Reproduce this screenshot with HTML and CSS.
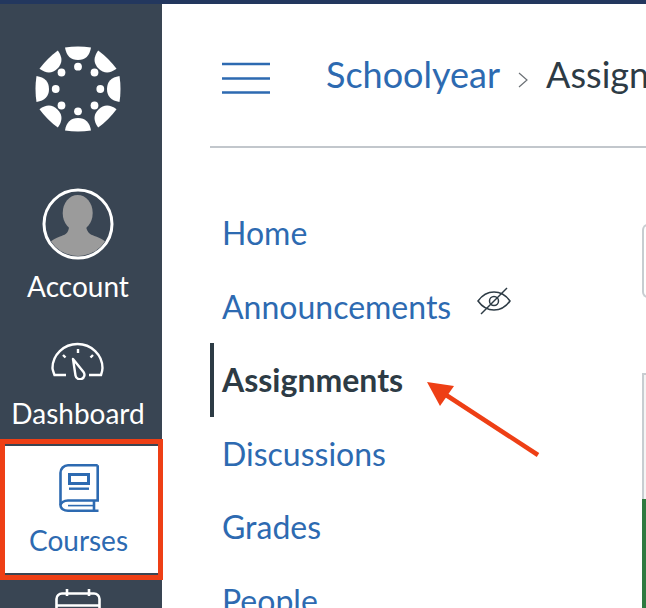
FILE: index.html
```html
<!DOCTYPE html>
<html lang="en">
<head>
<meta charset="utf-8">
<title>Schoolyear Assignments</title>
<link rel="stylesheet" href="styles.css">
</head>
<body>
<div class="topline"></div>
<div class="app">
  <nav class="rail">
    <svg class="logo" viewBox="0 0 86 86" aria-hidden="true">
      <g fill="#fff">
        <path d="M30 1.500 Q43 -0.500 56 1.500 Q54 14 43 14 Q32 14 30 1.500Z"/>
        <path d="M30 1.500 Q43 -0.500 56 1.500 Q54 14 43 14 Q32 14 30 1.500Z" transform="rotate(45 43 43)"/>
        <path d="M30 1.500 Q43 -0.500 56 1.500 Q54 14 43 14 Q32 14 30 1.500Z" transform="rotate(90 43 43)"/>
        <path d="M30 1.500 Q43 -0.500 56 1.500 Q54 14 43 14 Q32 14 30 1.500Z" transform="rotate(135 43 43)"/>
        <path d="M30 1.500 Q43 -0.500 56 1.500 Q54 14 43 14 Q32 14 30 1.500Z" transform="rotate(180 43 43)"/>
        <path d="M30 1.500 Q43 -0.500 56 1.500 Q54 14 43 14 Q32 14 30 1.500Z" transform="rotate(225 43 43)"/>
        <path d="M30 1.500 Q43 -0.500 56 1.500 Q54 14 43 14 Q32 14 30 1.500Z" transform="rotate(270 43 43)"/>
        <path d="M30 1.500 Q43 -0.500 56 1.500 Q54 14 43 14 Q32 14 30 1.500Z" transform="rotate(315 43 43)"/>
        <circle cx="43" cy="20.700" r="3.900"/><circle cx="43" cy="65.300" r="3.900"/>
        <circle cx="20.700" cy="43" r="3.900"/><circle cx="65.300" cy="43" r="3.900"/>
        <circle cx="26.500" cy="26.500" r="3.900"/><circle cx="59.500" cy="26.500" r="3.900"/>
        <circle cx="26.500" cy="59.500" r="3.900"/><circle cx="59.500" cy="59.500" r="3.900"/>
      </g>
    </svg>
    <a class="rail-item account">
      <svg class="avatar" viewBox="0 0 72 72" aria-hidden="true">
        <defs><clipPath id="c"><circle cx="36" cy="36" r="32"/></clipPath></defs>
        <circle cx="36" cy="36" r="34" fill="#394553"/>
        <g clip-path="url(#c)" fill="#9b9b9b">
          <ellipse cx="35.700" cy="25" rx="15" ry="18"/>
          <path d="M27 38C27 46 22 47 18 48.500C14 50 10 52 6 56V72H66V56C62 52 58 50 54 48.500C50 47 45 46 44 38z"/>
        </g>
        <circle cx="36" cy="36" r="34" fill="none" stroke="#fff" stroke-width="3"/>
      </svg>
      <span>Account</span>
    </a>
    <a class="rail-item dashboard">
      <svg class="dash-icon" viewBox="0 0 54 38" fill="none" stroke="#fff" stroke-width="2.400" aria-hidden="true">
        <path d="M15 33H3.500C2 29 1.500 27 1.500 26A25 24 0 0 1 51.500 26C51.500 28 51 30 50 33H38"/>
        <path d="M27 7v4M12 13l2.500 2.500M42 13l-2.500 2.500"/>
        <path d="M22 17l10.500 13a4.500 4.500 0 1 1-8 3.500z" stroke-linejoin="round"/>
      </svg>
      <span>Dashboard</span>
    </a>
    <a class="rail-item courses">
      <svg class="book-icon" viewBox="0 0 40 48" fill="none" stroke="#2d6ab1" stroke-width="2.600" aria-hidden="true">
        <path d="M38.700 1.300V36.500H9A7.500 5.100 0 0 0 9 46.700H39.500"/>
        <path d="M38.700 1.300H9A7.500 7.500 0 0 0 1.500 8.800V41"/>
        <path d="M35 36.500V46.700"/>
        <path d="M9 41.600H35" stroke-width="1.600"/>
        <rect x="10.500" y="10.500" width="19" height="9" stroke-width="3"/>
        <path d="M10 24.700H30" stroke-width="2.400"/>
      </svg>
      <span>Courses</span>
    </a>
    <svg class="cal-icon" viewBox="0 0 46 24" fill="none" stroke="#fff" stroke-width="2.600" aria-hidden="true">
      <path d="M1.500 24V10a5.500 5.500 0 0 1 5.500-5.500h32a5.500 5.500 0 0 1 5.500 5.500v14M1.500 16.500h43M12 0v7M34 0v7"/>
    </svg>
  </nav>
  <main class="content">
    <header class="crumbs">
      <svg class="burger" viewBox="0 0 48 32" aria-hidden="true">
        <path d="M0 2h48M0 16.500h48M0 30.500h48" stroke="#2d6ab1" stroke-width="2.500"/>
      </svg>
      <a class="crumb-link">Schoolyear</a>
      <svg class="chev" viewBox="0 0 10 16" fill="none" stroke="#6b7075" stroke-width="1.200" aria-hidden="true"><path d="M1 1l8 7-8 7"/></svg>
      <span class="crumb-current">Assignments</span>
    </header>
    <div class="body">
      <ul class="menu">
        <li><a>Home</a></li>
        <li><a>Announcements</a>
          <svg class="eye" viewBox="0 0 34 28" fill="none" stroke="#2d3b45" stroke-width="1.500" aria-hidden="true">
            <path d="M1 14C6 7 11 5 17 5s11 2 16 9c-5 7-10 9-16 9S6 21 1 14z"/>
            <circle cx="17" cy="14" r="4.500"/>
            <path d="M30 1L4 27"/>
          </svg>
        </li>
        <li class="active"><a>Assignments</a></li>
        <li><a>Discussions</a></li>
        <li><a>Grades</a></li>
        <li><a>People</a></li>
      </ul>
      <div class="side">
        <div class="box-top"></div>
        <div class="box-bottom"><div class="green"></div></div>
      </div>
    </div>
  </main>
</div>
<svg class="arrow" viewBox="0 0 120 80" aria-hidden="true">
  <path d="M111 74L16 12" stroke="#ee3f15" stroke-width="4.500"/>
  <path d="M0 1L27 5L13 25Z" fill="#ee3f15"/>
</svg>
</body>
</html>
```
FILE: styles.css
```css
* { box-sizing: border-box; }
html, body { margin: 0; padding: 0; }
body {
  width: 646px;
  height: 608px;
  overflow: hidden;
  background: #fff;
  font-family: Lato, "Open Sans", sans-serif;
  position: relative;
}
.topline { height: 4px; background: #23375e; }
.app { display: flex; height: 604px; }
.rail {
  width: 162px;
  flex: none;
  background: #394553;
  padding-right: 6px;
  display: flex;
  flex-direction: column;
  align-items: center;
  color: #fff;
}
.logo { width: 86px; height: 86px; margin-top: 42px; flex: none; }
.rail-item {
  display: flex;
  flex-direction: column;
  align-items: center;
  flex: none;
  font-size: 28px;
  line-height: 32px;
}
.account { margin-top: 56px; }
.avatar { width: 72px; height: 72px; display: block; margin-bottom: 10px; }
.dashboard { margin-top: 40px; }
.dash-icon { width: 54px; height: 38px; display: block; margin-bottom: 17px; }
.courses {
  width: 163px;
  height: 141px;
  margin-top: 10px;
  align-self: flex-start;
  background: #fff;
  color: #2d6ab1;
  border: 5px solid #ee3f15;
  padding: 20px 6px 0 0;
  box-shadow: inset 0 2px 0 #394553, inset 0 -2px 0 #394553;
}
.book-icon { width: 40px; height: 48px; display: block; margin-bottom: 12px; }
.cal-icon { width: 46px; height: 24px; flex: none; margin-top: 9px; }
.content { flex: 1; min-width: 0; padding-left: 48px; }
.crumbs {
  display: flex;
  align-items: center;
  height: 144px;
  padding: 0 0 2px 12px;
  border-bottom: 2px solid #c2c7cc;
  white-space: nowrap;
  overflow: hidden;
  font-size: 36px;
}
.burger { width: 48px; height: 32px; flex: none; margin-right: 56px; margin-top: 7px; }
.crumb-link { color: #2d6ab1; }
.chev { width: 10px; height: 16px; flex: none; margin: 12px 18px 0 18px; }
.crumb-current { color: #2d3b45; }
.body { display: flex; justify-content: space-between; }
.menu { list-style: none; margin: 48px 0 0; padding: 0; width: 400px; }
.menu li {
  height: 73.500px;
  display: flex;
  align-items: center;
  padding-left: 12px;
  font-size: 32px;
  color: #2d6ab1;
  white-space: nowrap;
}
.menu li.active {
  font-weight: 700;
  color: #2d3b45;
  box-shadow: inset 4px 0 0 #2d3b45;
}
.eye { width: 34px; height: 28px; margin-left: 26px; margin-bottom: 11px; flex: none; }
.side { width: 4px; flex: none; }
.box-top {
  width: 20px;
  height: 74px;
  margin-top: 76px;
  border: 2px solid #c7cdd1;
  border-right: 0;
  border-radius: 6px 0 0 6px;
}
.box-bottom {
  width: 4px;
  height: 240px;
  margin-top: 75px;
  background: #f5f5f5;
  border-left: 2px solid #c7cdd1;
  border-top: 2px solid #c7cdd1;
  padding-top: 124px;
}
.green { height: 120px; margin-left: -2px; background: #2f7a40; }
.arrow { position: absolute; left: 427px; top: 381px; width: 120px; height: 80px; }
```
